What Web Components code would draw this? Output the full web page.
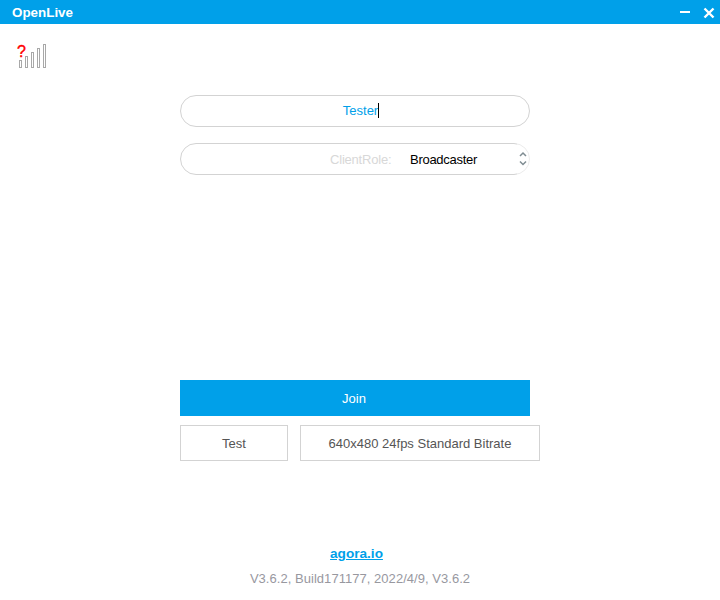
<!DOCTYPE html>
<html><head><meta charset="utf-8">
<style>
html,body{margin:0;padding:0;background:#fff}
body{width:720px;height:600px;overflow:hidden;font-family:"Liberation Sans",Arial,sans-serif}
</style></head><body>
<open-live></open-live>
<script>
function def(name,css,html){
  customElements.define(name,class extends HTMLElement{
    constructor(){super();const s=this.attachShadow({mode:'open'});s.innerHTML='<style>'+css+'</style>'+html;}
  });
}
def('title-bar',`
:host{display:flex;align-items:center;justify-content:space-between;height:24px;background:#00a0e9;color:#fff;padding:0 4px 0 12px;box-sizing:border-box}
.t{font:bold 13.4px "Liberation Sans",Arial,sans-serif}
.b{display:flex;align-items:center;gap:11px}
svg{display:block}
`,`<span class="t"><slot></slot></span><div class="b">
<svg width="12" height="12" viewBox="0 0 12 12"><rect x="1" y="5" width="10" height="2" fill="#fff"/></svg>
<svg width="14" height="14" viewBox="0 0 14 14"><path d="M2.5 3.5 L11.5 12.5 M11.5 3.5 L2.5 12.5" stroke="#fff" stroke-width="2.4" fill="none"/></svg>
</div>`);
def('signal-icon',`
:host{display:block;position:relative;width:30px;height:25px}
svg{display:block}
.q{position:absolute;left:0;top:-2px;font:16px/20px "Liberation Sans",Arial,sans-serif;color:#f00;-webkit-text-stroke:.4px #f00}
`,`<svg width="30" height="25" viewBox="0 0 30 25" fill="#fff" stroke="#a8a8a8"><rect x="2.5" y="16.5" width="2" height="7"/><rect x="8.5" y="12.5" width="2" height="11"/><rect x="14.5" y="8.5" width="2" height="15"/><rect x="20.5" y="4.5" width="2" height="19"/><rect x="26.5" y="0.5" width="2" height="23"/></svg><span class="q">?</span>`);
def('pill-input',`
:host{display:flex;align-items:center;justify-content:center;box-sizing:border-box;width:350px;height:32px;padding:0 0 2px 12px;border:1px solid #d3d3d3;border-radius:16px;color:#00a0e9;font:13px "Liberation Sans",Arial,sans-serif}
.c{display:inline-block;width:1px;height:15px;background:#000;vertical-align:-3px}
`,`<span><slot></slot><span class="c"></span></span>`);
def('role-select',`
:host{display:flex;align-items:center;box-sizing:border-box;width:350px;height:32px;border:1px solid #d3d3d3;border-radius:16px;font:13px "Liberation Sans",Arial,sans-serif;position:relative;padding-left:149px}
:host::after{content:"";position:absolute;right:-1px;top:-1px;width:13px;height:32px;background:rgba(255,255,255,.55)}
.l{color:#d8d8d8;width:80px;letter-spacing:-.2px}
.v{color:#000;flex:1;letter-spacing:-.28px}
svg{display:block;margin-right:1px;position:relative;z-index:1}
`,`<span class="l"><slot name="label"></slot></span><span class="v"><slot></slot></span>
<svg width="10" height="16" viewBox="0 0 10 16" fill="none" stroke="#7f8c92" stroke-width="1.5"><path d="M2 5 L5 2 L8 5 M2 10.5 L5 13.5 L8 10.5"/></svg>`);
def('flat-button',`
:host{display:flex;align-items:center;justify-content:center;box-sizing:border-box;height:36px;border:1px solid #d3d3d3;color:#555;font:13px "Liberation Sans",Arial,sans-serif;background:#fff}
:host([primary]){background:#00a0e9;border-color:#00a0e9;color:#fff;padding-right:2px}
`,`<slot></slot>`);
def('open-live',`
:host{display:flex;flex-direction:column;width:720px;height:600px}
.main{display:flex;flex-direction:column;padding:20px 0 0 180px;flex:1;box-sizing:border-box}
signal-icon{margin-left:-163px}
.gap1{height:26px}
pill-input,role-select{flex:none}
.g{height:16px}
.sp{height:205px}
.row{display:flex;gap:12px;margin-top:9px}
.foot{display:flex;flex-direction:column;align-items:center;font:13px "Liberation Sans",Arial,sans-serif;margin:85px 0 0 -180px}
a{font:bold 13.6px/15px "Liberation Sans",Arial,sans-serif;color:#00a0e9;text-decoration:underline;margin-left:-7px}
.ver{color:#98989f;font-size:13px;letter-spacing:.04px;margin-top:10px;font-family:"Liberation Sans",Arial,sans-serif}
`,`<title-bar>OpenLive</title-bar><div class="main">
<signal-icon></signal-icon><div class="gap1"></div>
<pill-input>Tester</pill-input><div class="g"></div>
<role-select><span slot="label">ClientRole:</span>Broadcaster</role-select>
<div class="sp"></div>
<flat-button primary style="width:350px">Join</flat-button>
<div class="row"><flat-button style="width:108px">Test</flat-button><flat-button style="width:240px">640x480 24fps Standard Bitrate</flat-button></div>
<div class="foot"><a>agora.io</a><span class="ver">V3.6.2, Build171177, 2022/4/9, V3.6.2</span></div>
</div>`);
</script>
</body></html>
